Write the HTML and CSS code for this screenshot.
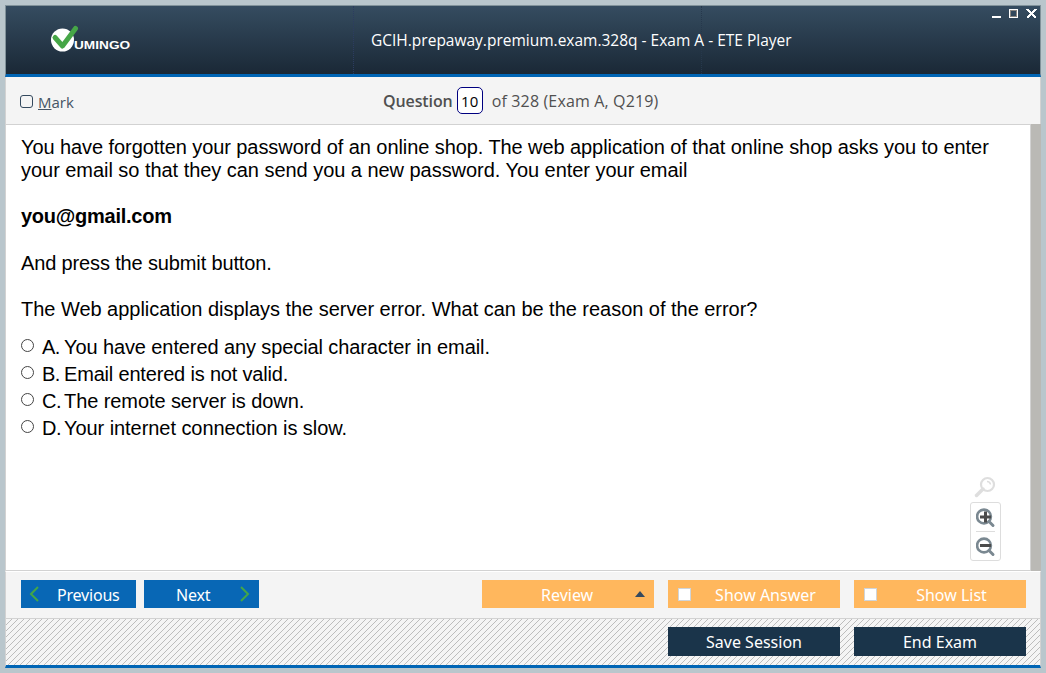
FILE: index.html
```html
<!DOCTYPE html>
<html lang="en">
<head>
<meta charset="utf-8">
<title>ETE Player</title>
<link rel="stylesheet" href="styles.css">
</head>
<body>
<div class="window">
  <header class="titlebar">
    <div class="brand">
      <svg class="brand-mark" width="30" height="28" viewBox="0 0 30 28"><circle cx="12.500" cy="15" r="11.500" fill="#fff"/><path d="M5 12.500L12.500 21L25.500 3.500" fill="none" stroke="#46a647" stroke-width="5" stroke-linecap="round" stroke-linejoin="round"/></svg>
      <span class="brand-name">UMINGO</span>
    </div>
    <h1 class="title"><span>GCIH.prepaway.premium.exam.328q - Exam A - ETE Player</span></h1>
    <div class="controls">
      <svg width="46" height="10" viewBox="0 0 46 10" shape-rendering="crispEdges"><path d="M0 7h9v2H0z" fill="#fff"/><path d="M17.500 .5h8v8h-8z" fill="none" stroke="#fff"/><path d="M18.500 1.500h6v6h-6z" fill="none" stroke="#8a8580"/><path d="M35 0l9 9M44 0l-9 9" stroke="#fff" stroke-width="2.400"/></svg>
    </div>
  </header>
  <div class="questionbar">
    <label class="mark"><i class="mark-box"></i><span class="mark-text"><u>M</u>ark</span></label>
    <div class="position"><b class="q-label">Question</b><span class="q-num">10</span><span class="q-of">of 328 (Exam A, Q219)</span></div>
  </div>
  <main class="content">
    <div class="paper">
      <p class="para"><span class="l1">You have forgotten your password of an online shop. The web application of that online shop asks you to enter</span><br><span class="l2">your email so that they can send you a new password. You enter your email</span></p>
      <p class="para"><b class="l3">you@gmail.com</b></p>
      <p class="para"><span class="l4">And press the submit button.</span></p>
      <p class="para"><span class="l5">The Web application displays the server error. What can be the reason of the error?</span></p>
      <ul class="answers">
        <li><i class="radio"></i><span class="letter">A.</span><span class="a1">You have entered any special character in email.</span></li>
        <li><i class="radio"></i><span class="letter">B.</span><span class="a2">Email entered is not valid.</span></li>
        <li><i class="radio"></i><span class="letter">C.</span><span class="a3">The remote server is down.</span></li>
        <li><i class="radio"></i><span class="letter">D.</span><span class="a4">Your internet connection is slow.</span></li>
      </ul>
      <div class="zoom">
        <svg class="lens" width="22" height="22" viewBox="0 0 22 22" fill="none" stroke="#dedede"><circle cx="13.500" cy="8.500" r="6.500" stroke-width="2.200"/><path d="M9 13L2.500 19.500" stroke-width="3.500" stroke-linecap="round"/><path d="M13 5.500q3 0 3.500 3" stroke-width="1.500"/></svg>
        <div class="zoom-box">
          <svg width="20" height="20" viewBox="0 0 20 20" fill="none"><circle cx="8" cy="8.500" r="6.900" stroke="#7a8891" stroke-width="2.600"/><path d="M13 13.500l4 4" stroke="#7a8891" stroke-width="3" stroke-linecap="round"/><path d="M4 9h11M9.500 3.500v11" stroke="#4b4b4b" stroke-width="3"/></svg>
          <hr class="zoom-line">
          <svg width="20" height="20" viewBox="0 0 20 20" fill="none"><circle cx="8" cy="8.500" r="6.900" stroke="#7a8891" stroke-width="2.600"/><path d="M13 13.500l4 4" stroke="#7a8891" stroke-width="3" stroke-linecap="round"/><path d="M4 8.500h11" stroke="#4b4b4b" stroke-width="3"/></svg>
        </div>
      </div>
    </div>
    <div class="scrollbar"></div>
  </main>
  <nav class="actions">
    <button class="btn nav prev"><svg width="10" height="16" viewBox="0 0 10 16"><path d="M9 1L2 8l7 7" fill="none" stroke="#43a648" stroke-width="2"/></svg><span>Previous</span></button>
    <button class="btn nav next"><span>Next</span><svg width="10" height="16" viewBox="0 0 10 16"><path d="M1 1l7 7-7 7" fill="none" stroke="#43a648" stroke-width="2"/></svg></button>
    <button class="btn wide orange review"><span>Review</span><i class="caret"></i></button>
    <button class="btn wide orange"><i class="check"></i><span class="show">Show Answer</span></button>
    <button class="btn wide orange"><i class="check"></i><span class="show">Show List</span></button>
  </nav>
  <footer class="session">
    <button class="btn wide dark"><span>Save Session</span></button>
    <button class="btn wide dark"><span>End Exam</span></button>
  </footer>
</div>
</body>
</html>
```
FILE: styles.css
```css
* { box-sizing: border-box; }
body { margin: 0; padding: 5px; height: 673px; overflow: hidden; background: #b9c6cc; font-family: "Open Sans", "Noto Sans", sans-serif; }
.window { width: 1036px; height: 663px; display: flex; flex-direction: column; white-space: nowrap; }
.titlebar { height: 72px; flex: none; border: 1px solid #81929a; border-bottom: 3px solid #0065b5; background: linear-gradient(#354c60, #1a2836); display: grid; grid-template-columns: 348px 348px 1fr; color: #fff; }
.brand { padding: 19px 0 0 44px; display: flex; border-right: 1px dotted #2c3c60; }
.brand-mark { flex: none; }
.brand-name { font: bold 10.5px/14px "Liberation Sans", sans-serif; margin: 13px 0 0 -6px; transform: scaleX(1.3); transform-origin: left; }
.title { margin: 0; padding: 22px 0 0 17px; font-size: 15.5px; font-weight: 400; line-height: 24px; border-right: 1px dotted #26384c; }
.controls { display: flex; justify-content: flex-end; padding: 3px 2px 0 0; }
.questionbar { height: 47px; flex: none; background: #f4f4f4; border: solid #d2d2d2; border-width: 0 1px; display: flex; color: #505050; font-size: 16px; line-height: 24px; }
.mark { display: flex; width: 377px; padding: 13px 0 0 14px; color: #455565; }
.mark-box { width: 13px; height: 13px; border: 1px solid #34495e; border-radius: 3px; margin: 5px 5px 0 0; }
.mark-text { font-size: 15px; }
.position { display: flex; padding-top: 10px; line-height: 28px; }
.q-label { font-weight: 600; letter-spacing: -.1px; }
.q-num { width: 26px; height: 27px; border: 1px solid #000080; border-radius: 5px; background: #fff; color: #000; text-align: center; line-height: 27px; font-size: 15px; margin: 0 9px 0 4px; }
.q-of { letter-spacing: .15px; }
.content { height: 448px; flex: none; display: flex; }
.paper { width: 1026px; height: 447px; background: #fff; border: 1px solid #d2d2d2; padding: 11px 0 0 15px; font: 20px/23.25px "Liberation Sans", Arial, sans-serif; color: #000; display: grid; grid-template-rows: 45.750px repeat(3, 46.5px) 1fr; grid-template-columns: 949px 1fr; align-items: start; }
.para { margin: 0; grid-column: 1 / 3; }
.para + .para { padding-top: 23.25px; }
.l1 { letter-spacing: -.078px; }
.l2 { letter-spacing: -.04px; }
.l3 { letter-spacing: -.25px; }
.l4 { letter-spacing: -.14px; }
.l5 { letter-spacing: -.03px; }
.a1 { letter-spacing: -.1px; }
.a2 { letter-spacing: -.18px; }
.a3 { letter-spacing: -.08px; }
.a4 { letter-spacing: -.06px; }
.answers { list-style: none; margin: 0; padding: 12.750px 0 0; line-height: 27px; }
.answers li { display: flex; height: 27px; }
.radio { width: 13px; height: 13px; border: 1px solid #444; border-radius: 50%; margin: 5px 8px 0 0; }
.letter { width: 22px; letter-spacing: -.5px; }
.zoom { width: 31px; padding-top: 154.750px; line-height: 0; }
.lens { margin-left: 4px; display: block; }
.zoom-box { margin-top: 4px; width: 31px; height: 59px; border: 1px solid #ddd; border-radius: 3px; padding: 5px; }
.zoom-line { border: 0; border-top: 1px solid #ddd; margin: 3px 0 5px; }
.scrollbar { width: 10px; height: 447px; background: #bab9b5; }
.actions { height: 48px; flex: none; margin-top: -1px; background: #f4f4f4; border: 1px solid #d2d2d2; border-top-color: #fff; display: flex; padding: 8px 0 0 15px; }
.btn { border: 0; padding: 0; margin: 0; color: #fff; height: 28px; display: flex; align-items: center; font: 16px/28px "Noto Sans", sans-serif; white-space: nowrap; }
.btn span { padding-top: 2px; }
.nav { width: 115px; background: #0867b5; margin-right: 8px; }
.prev { padding-left: 8px; gap: 18px; letter-spacing: -.2px; }
.next { padding-left: 32px; gap: 30px; letter-spacing: -.2px; }
.wide { width: 172px; }
.orange { background: #ffb75d; margin-right: 14px; }
.review { margin-left: 215px; padding-left: 59px; }
.caret { margin-left: 42px; border: 5px solid transparent; border-top: 0; border-bottom: 6px solid #34495e; }
.check { width: 13px; height: 13px; background: #fff; border: 1px solid #d0d4d8; margin-left: 10px; }
.show { flex: 1; text-align: center; }
.session { height: 49px; flex: none; border: solid #d2d2d2; border-width: 0 1px; border-bottom: 3px solid #0065b5; background: #f5f5f5 url("data:image/svg+xml,%3Csvg xmlns='http://www.w3.org/2000/svg' width='6' height='6' shape-rendering='crispEdges'%3E%3Cpath fill='%23bdbdbd' d='M5 0h1v1h-1zM4 1h1v1h-1zM3 2h1v1h-1zM2 3h1v1h-1zM1 4h1v1h-1zM0 5h1v1h-1z'/%3E%3C/svg%3E"); display: flex; gap: 14px; padding: 8px 0 0 662px; }
.dark { background: #1a344a; justify-content: center; height: 29px; }
.dark span { padding-top: 1px; }
```
